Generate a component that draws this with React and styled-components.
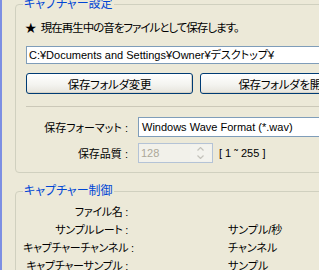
import styled, { createGlobalStyle } from "styled-components";

const GlobalStyle = createGlobalStyle`
  body {
    margin: 0;
    background: #ece9d8;
  }
`;

const captureRows = [
  { label: "ファイル名 :", unit: "" },
  { label: "サンプルレート :", unit: "サンプル/秒" },
  { label: "キャプチャーチャンネル :", unit: "チャンネル" },
  { label: "キャプチャーサンプル :", unit: "サンプル" },
];

export default function App() {
  return (
    <>
      <GlobalStyle />
      <Window>
        <Group $top={-3} $height={176}>
          <Legend>キャプチャー設定</Legend>
          <Notice>★ 現在再生中の音をファイルとして保存します。</Notice>
          <PathBox>C:¥Documents and Settings¥Owner¥デスクトップ¥</PathBox>
          <ButtonRow>
            <Button>保存フォルダ変更</Button>
            <Button>保存フォルダを開く</Button>
          </ButtonRow>
          <Separator />
          <FormRow $top={10}>
            <Label>保存フォーマット :</Label>
            <FormatBox>Windows Wave Format (*.wav)</FormatBox>
          </FormRow>
          <FormRow $top={6}>
            <Label>保存品質 :</Label>
            <Spinner>
              <SpinValue>128</SpinValue>
              <SpinButtons>
                <SpinArrow>
                  <svg width="7" height="4" viewBox="0 0 7 4">
                    <path d="M0.5 3.5 L3.5 0.5 L6.5 3.5" fill="none" stroke="#c4c3bc" strokeWidth="1.2" />
                  </svg>
                </SpinArrow>
                <SpinArrow>
                  <svg width="7" height="4" viewBox="0 0 7 4">
                    <path d="M0.5 0.5 L3.5 3.5 L6.5 0.5" fill="none" stroke="#c4c3bc" strokeWidth="1.2" />
                  </svg>
                </SpinArrow>
              </SpinButtons>
            </Spinner>
            <Range>[ 1 ˜ 255 ]</Range>
          </FormRow>
        </Group>
        <Group $top={11} $height={120}>
          <Legend>キャプチャー制御</Legend>
          <InfoGrid>
            {captureRows.map((row) => (
              <InfoRow key={row.label}>
                <InfoLabel>{row.label}</InfoLabel>
                <span />
                <span>{row.unit}</span>
              </InfoRow>
            ))}
          </InfoGrid>
        </Group>
      </Window>
    </>
  );
}

const Window = styled.div`
  width: 319px;
  height: 270px;
  overflow: hidden;
  box-sizing: border-box;
  background: #ece9d8;
  border-left: 2px solid #7d8fe3;
  padding-left: 13px;
  font-family: "Liberation Sans", "Noto Sans CJK JP", sans-serif;
  font-size: 11px;
  font-feature-settings: "palt";
  color: #000;
`;

const Group = styled.fieldset`
  margin: ${(p) => p.$top}px 0 0 0;
  padding: 0 0 0 7px;
  width: 360px;
  min-width: 0;
  height: ${(p) => p.$height}px;
  box-sizing: border-box;
  border: 1px solid #d0d0bf;
  border-radius: 4px;
  display: flex;
  flex-direction: column;
  align-items: flex-start;
`;

const Legend = styled.legend`
  padding: 0 1px;
  line-height: 14px;
  font-size: 12px;
  color: #0046d5;
`;

const Notice = styled.div`
  margin: 10px 0 0 2px;
  line-height: 14px;
  font-size: 11.5px;
  letter-spacing: -1px;
  word-spacing: 3px;
`;

const PathBox = styled.div`
  margin: 11px 0 0 3px;
  width: 330px;
  height: 18px;
  box-sizing: border-box;
  border: 1px solid #7f9db9;
  background: #fff;
  padding-left: 2px;
  line-height: 16px;
  white-space: nowrap;
`;

const ButtonRow = styled.div`
  display: flex;
  gap: 7px;
  margin: 9px 0 0 3px;
`;

const Button = styled.button`
  width: 167px;
  height: 21px;
  flex: none;
  padding: 0;
  border: 1px solid #003c74;
  border-radius: 3px;
  background: linear-gradient(#ffffff, #f4f4f0 55%, #e6e4dc);
  box-shadow: inset -1px -1px 0 #d8d3c6;
  font: inherit;
  font-size: 11.5px;
  letter-spacing: -0.3px;
  font-feature-settings: "palt";
  color: #000;
  white-space: nowrap;
`;

const Separator = styled.div`
  margin: 12px 0 0 3px;
  width: 330px;
  height: 1px;
  background: #cbc8b8;
`;

const FormRow = styled.div`
  display: flex;
  align-items: center;
  margin-top: ${(p) => p.$top}px;
`;

const Label = styled.div`
  width: 105px;
  margin-right: 10px;
  text-align: right;
  white-space: nowrap;
`;

const FormatBox = styled.div`
  width: 220px;
  height: 20px;
  box-sizing: border-box;
  border: 1px solid #7f9db9;
  background: #fff;
  padding-left: 3px;
  line-height: 18px;
  white-space: nowrap;
`;

const Spinner = styled.div`
  width: 75px;
  height: 20px;
  box-sizing: border-box;
  border: 1px solid #b4c3d6;
  background: #f2f1ea;
  display: flex;
  align-items: stretch;
`;

const SpinValue = styled.div`
  flex: 1;
  padding-left: 2px;
  line-height: 18px;
  color: #aca899;
`;

const SpinButtons = styled.div`
  width: 21px;
  display: flex;
  flex-direction: column;
  padding: 1px 1px 1px 0;
`;

const SpinArrow = styled.div`
  flex: 1;
  display: flex;
  align-items: center;
  justify-content: center;
  background: #f3f3ee;
  border-radius: 2px;
`;

const Range = styled.div`
  margin-left: 6px;
  white-space: nowrap;
`;

const InfoGrid = styled.div`
  margin-top: 5px;
  display: flex;
  flex-direction: column;
`;

const InfoRow = styled.div`
  display: grid;
  grid-template-columns: 105px 100px auto;
  line-height: 18px;
  white-space: nowrap;
`;

const InfoLabel = styled.div`
  text-align: right;
  letter-spacing: -0.3px;
`;
